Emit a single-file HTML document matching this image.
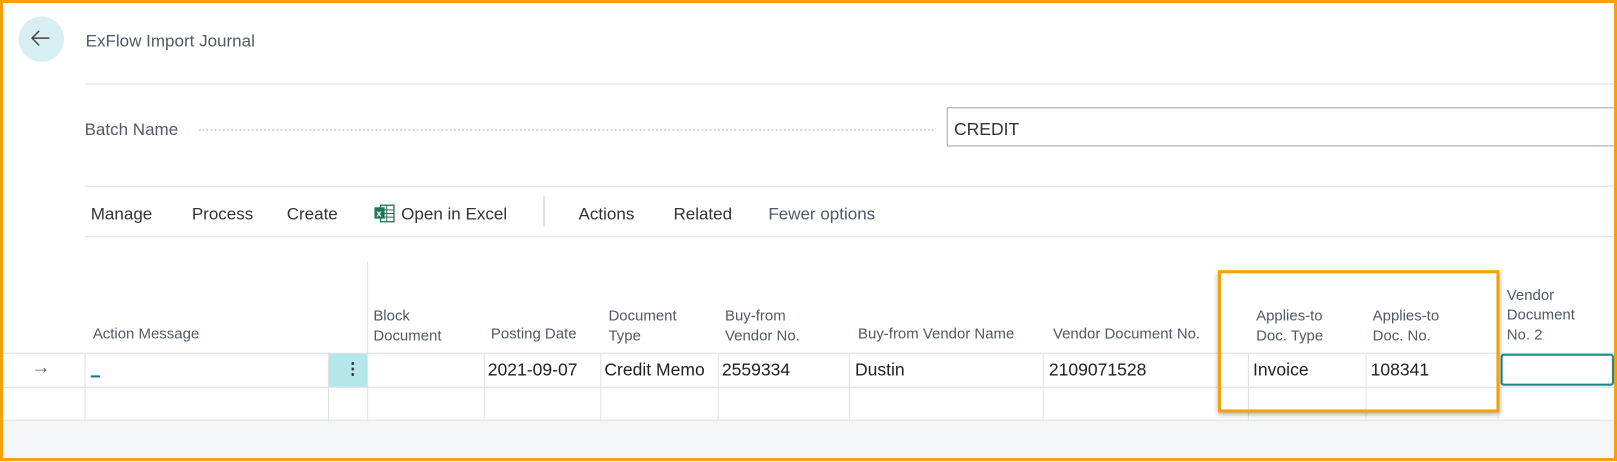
<!DOCTYPE html>
<html><head><meta charset="utf-8"><style>
*{margin:0;padding:0;box-sizing:border-box}
body{width:1617px;height:461px;overflow:hidden;background:#fff;font-family:"Segoe UI","Liberation Sans",sans-serif;position:relative;color:#212121}
#w{position:absolute;left:0;top:0;width:1568px;height:447px;transform:scale(1.0313);transform-origin:0 0}
.a{position:absolute;white-space:nowrap}
.hl{position:absolute;height:1px;background:#dcdde0}
.vl{position:absolute;width:1px;background:#e1e2e4}
.h{position:absolute;font-size:14.5px;color:#505a66;line-height:19px;white-space:nowrap}
.d{position:absolute;font-size:17px;color:#212121;top:349px}
.m{position:absolute;font-size:16.5px;color:#333;top:199px}
</style></head><body>
<div id="w">
<div class="a" style="left:18px;top:16px;width:44px;height:44px;border-radius:50%;background:#d8eff2"></div>
<svg class="a" style="left:28px;top:27px" width="24" height="20" viewBox="0 0 24 20"><path d="M20 10H3M10 3L3 10L10 17" stroke="#444" stroke-width="1.4" fill="none"/></svg>
<div class="a" style="left:83px;top:31px;font-size:16.5px;color:#505a66">ExFlow Import Journal</div>
<div class="hl" style="left:82px;top:81px;width:1486px"></div>
<div class="a" style="left:82px;top:117px;font-size:16.5px;color:#505a66">Batch Name</div>
<div class="a" style="left:193px;top:125px;width:712px;border-top:2px dotted #d6d7d9"></div>
<div class="a" style="left:918px;top:104px;width:660px;height:38px;border:1px solid #a6a6a6"></div>
<div class="a" style="left:925px;top:116px;font-size:17px;color:#333">CREDIT</div>
<div class="hl" style="left:82px;top:180px;width:1486px"></div>
<div class="m" style="left:88px">Manage</div>
<div class="m" style="left:186px">Process</div>
<div class="m" style="left:278px">Create</div>
<svg class="a" style="left:363px;top:198px" width="20" height="18" viewBox="0 0 20 18"><rect x="6" y="1" width="13" height="16" fill="none" stroke="#1b7a55" stroke-width="1.3"/><path d="M6 5.5H19M6 9H19M6 12.5H19M12 1V17" stroke="#1b7a55" stroke-width="1"/><rect x="0" y="3" width="10" height="11" fill="#1b7a55"/><text x="2" y="12" font-size="9" fill="#fff" font-family="Liberation Sans" font-weight="bold">x</text></svg>
<div class="m" style="left:389px">Open in Excel</div>
<div class="vl" style="left:527px;top:190px;height:30px;background:#c8c8c8"></div>
<div class="m" style="left:561px">Actions</div>
<div class="m" style="left:653px">Related</div>
<div class="m" style="left:745px;color:#505a66">Fewer options</div>
<div class="hl" style="left:82px;top:229px;width:1486px"></div>
<div class="vl" style="left:356px;top:254px;height:88px"></div>
<div class="h" style="left:90px;top:315px">Action Message</div>
<div class="h" style="left:362px;top:298px">Block<br>Document</div>
<div class="h" style="left:476px;top:315px">Posting Date</div>
<div class="h" style="left:590px;top:298px">Document<br>Type</div>
<div class="h" style="left:703px;top:298px">Buy-from<br>Vendor No.</div>
<div class="h" style="left:832px;top:315px">Buy-from Vendor Name</div>
<div class="h" style="left:1021px;top:315px">Vendor Document No.</div>
<div class="h" style="left:1218px;top:298px">Applies-to<br>Doc. Type</div>
<div class="h" style="left:1331px;top:298px">Applies-to<br>Doc. No.</div>
<div class="h" style="left:1461px;top:278px">Vendor<br>Document<br>No. 2</div>
<div class="hl" style="left:0;top:342px;width:1568px"></div>
<div class="hl" style="left:0;top:375px;width:1568px"></div>
<div class="hl" style="left:0;top:407px;width:1568px"></div>
<div class="a" style="left:0;top:408px;width:1568px;height:40px;background:#f4f5f7"></div>
<div class="a" style="left:318px;top:343px;width:38px;height:32px;background:#b4e6ea"></div>
<div class="a" style="left:334px;top:348px;font-size:16px;font-weight:bold;color:#333">⋮</div>
<div class="a" style="left:30px;top:346px;font-size:19px;color:#666">→</div>
<div class="a" style="left:88px;top:364px;width:9px;height:2px;background:#0a7f86"></div>
<div class="vl" style="left:82px;top:342px;height:65px"></div>
<div class="vl" style="left:318px;top:342px;height:65px"></div>
<div class="vl" style="left:356px;top:342px;height:65px"></div>
<div class="vl" style="left:469px;top:342px;height:65px"></div>
<div class="vl" style="left:582px;top:342px;height:65px"></div>
<div class="vl" style="left:696px;top:342px;height:65px"></div>
<div class="vl" style="left:823px;top:342px;height:65px"></div>
<div class="vl" style="left:1011px;top:342px;height:65px"></div>
<div class="vl" style="left:1210px;top:342px;height:65px"></div>
<div class="vl" style="left:1324px;top:342px;height:65px"></div>
<div class="vl" style="left:1452px;top:342px;height:65px"></div>
<div class="d" style="left:473px">2021-09-07</div>
<div class="d" style="left:586px">Credit Memo</div>
<div class="d" style="left:700px">2559334</div>
<div class="d" style="left:829px">Dustin</div>
<div class="d" style="left:1017px">2109071528</div>
<div class="d" style="left:1215px">Invoice</div>
<div class="d" style="left:1329px">108341</div>
<div class="a" style="left:1455px;top:343px;width:110px;height:31px;border:2px solid #1a8a8a;border-radius:3px"></div>
<div class="a" style="left:1181px;top:262px;width:273px;height:138px;border:3px solid #f5a10b;box-shadow:0 2px 5px rgba(0,0,0,.35)"></div>
</div>
<div class="a" style="left:0;top:0;width:1617px;height:461px;border:3px solid #f5a10b;z-index:5"></div>
</body></html>
